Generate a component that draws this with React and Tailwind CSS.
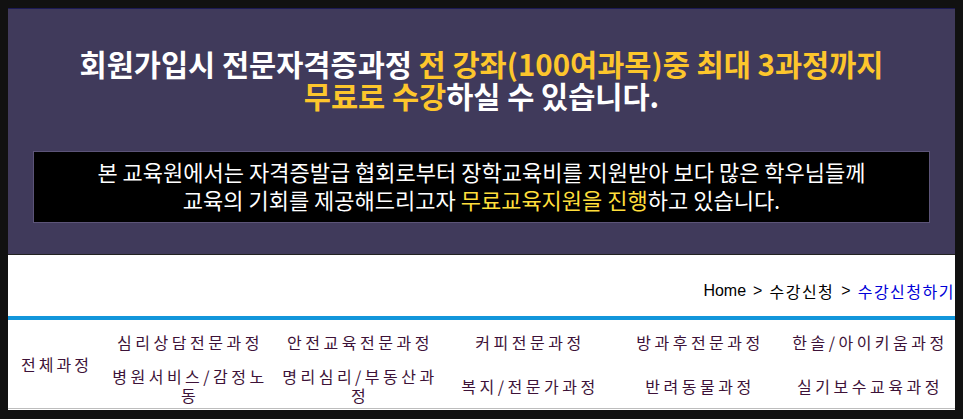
import React from "react";

const KR = { fontFamily: '"Noto Sans CJK KR", "Noto Sans", sans-serif' };
const BC = { fontFamily: '"Liberation Sans", "Noto Sans CJK KR", sans-serif' };

const row1 = ["심리상담전문과정", "안전교육전문과정", "커피전문과정", "방과후전문과정", "한솔/아이키움과정"];
const row2 = ["병원서비스/감정노동", "명리심리/부동산과정", "복지/전문가과정", "반려동물과정", "실기보수교육과정"];

export default function App() {
  return (
    <div className="w-[963px] h-[419px] bg-[#111111] pt-2 pl-2 overflow-hidden" style={KR}>
      <div className="w-[947px]">
        {/* Purple banner */}
        <div className="h-[247px] bg-[#403a5b] border-t border-[#1c1a55] border-b border-b-[#222] flex flex-col items-center">
          <div className="pt-[38px] text-center font-bold text-white text-[29.5px] leading-[32px]">
            <div>
              회원가입시 전문자격증과정 <span className="text-[#fdc62c]">전 강좌(100여과목)중 최대 3과정까지</span>
            </div>
            <div>
              <span className="text-[#fdc62c]">무료로 수강</span>하실 수 있습니다.
            </div>
          </div>
          <div className="mt-[40px] w-[897px] h-[72px] bg-black border border-[#5c5478] pt-[5px] text-center text-white text-[22px] leading-[28px]">
            <div>본 교육원에서는 자격증발급 협회로부터 장학교육비를 지원받아 보다 많은 학우님들께</div>
            <div>
              교육의 기회를 제공해드리고자 <span className="text-[#ffde3b]">무료교육지원을 진행</span>하고 있습니다.
            </div>
          </div>
        </div>

        {/* White area */}
        <div className="bg-white">
          <div className="h-[61px] flex items-start justify-end pt-[26px] text-[16px] leading-[20px] text-black" style={BC}>
            <span>Home</span>
            <span className="mx-[7px]">&gt;</span>
            <span style={KR} className="tracking-[1.5px]">수강신청</span>
            <span className="mx-[7px]">&gt;</span>
            <span style={KR} className="text-[#0000d8] tracking-[1.5px]">수강신청하기</span>
          </div>
          <div className="h-[4px] bg-[#1296db]" />
          <div className="grid grid-cols-[97px_repeat(5,1fr)] grid-rows-[44px_44px] border-b border-[#bdbdbd] text-[16px] leading-[19px] text-[#3d1238] tracking-[3.5px]">
            <div className="row-span-2 flex items-center justify-center tracking-[3px]">전체과정</div>
            {row1.map((t) => (
              <div key={t} className="flex items-center justify-center text-center break-all">{t}</div>
            ))}
            {row2.map((t) => (
              <div key={t} className="flex items-center justify-center text-center break-all">{t}</div>
            ))}
          </div>
          <div className="h-px bg-white" />
        </div>
      </div>
    </div>
  );
}
